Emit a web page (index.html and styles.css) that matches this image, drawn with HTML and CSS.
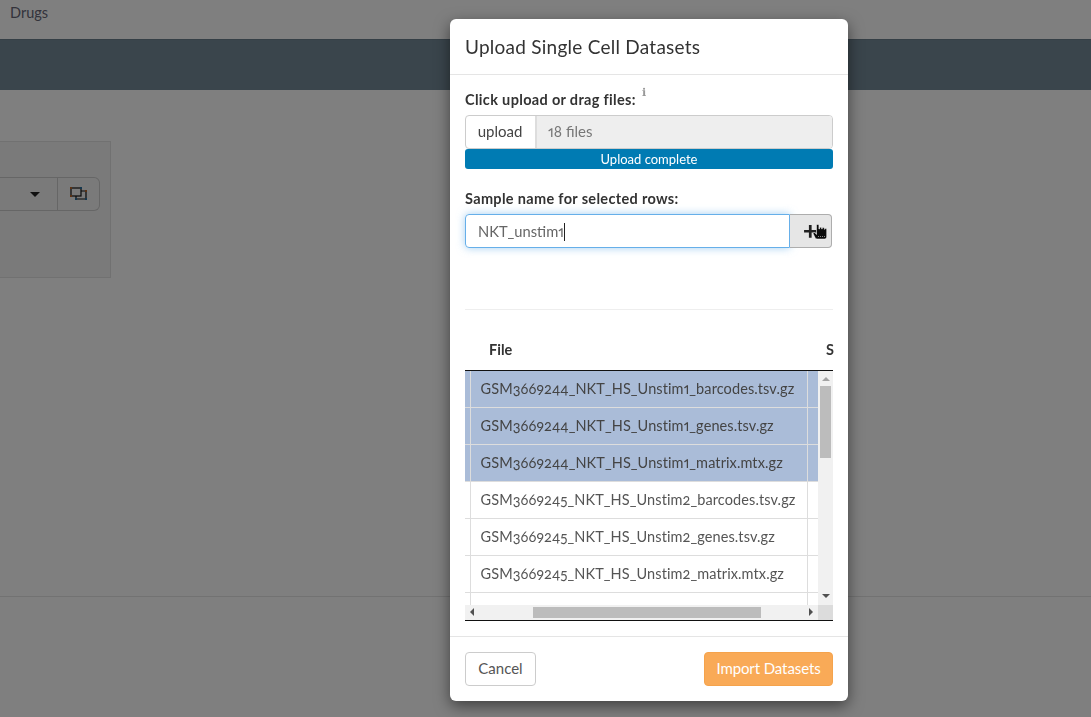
FILE: index.html
```html
<!DOCTYPE html>
<html lang="en">
<head>
    <meta charset="UTF-8">
    <meta name="viewport" content="width=device-width, initial-scale=1.0">
    <title>Upload Single Cell Datasets</title>
    <link rel="stylesheet" href="styles.css">
</head>
<body>
    <div class="page">
        <nav class="topnav">Drugs</nav>
        <div class="banner"></div>
        <main class="content">
            <div class="panel">
                <div class="picker">
                    <div class="picker-select"><span class="caret"></span></div>
                    <div class="picker-btn">
                        <svg width="18" height="14" viewBox="0 0 18 14" fill="none">
                            <rect x="1" y="1" width="10" height="8" stroke="#111" stroke-width="1.2"/>
                            <path d="M11 4h5v8H6V9" stroke="#111" stroke-width="1.2"/>
                            <rect x="0" y="0" width="2" height="2" fill="#b5642a"/>
                            <rect x="10" y="0" width="2" height="2" fill="#2b6f9c"/>
                            <rect x="0" y="8" width="2" height="2" fill="#b5642a"/>
                            <rect x="15" y="3" width="2" height="2" fill="#b5642a"/>
                            <rect x="15" y="11" width="2" height="2" fill="#2b6f9c"/>
                            <rect x="5" y="11" width="2" height="2" fill="#2b6f9c"/>
                        </svg>
                    </div>
                </div>
            </div>
        </main>
    </div>

    <div class="backdrop"></div>

    <div class="modal">
        <div class="modal-header">
            <h4>Upload Single Cell Datasets</h4>
        </div>
        <div class="modal-body">
            <div class="label-row">
                <label>Click upload or drag files:</label>
                <span class="info">&#8505;</span>
            </div>
            <div class="file-row">
                <span class="file-btn">upload</span>
                <span class="file-name">18 files</span>
            </div>
            <div class="progress">Upload complete</div>

            <label class="sample-label">Sample name for selected rows:</label>
            <div class="sample-row">
                <div class="sample-input">NKT_unstim1<span class="text-caret"></span></div>
                <div class="add-btn">
                    <span class="plus">+</span>
                    <svg class="hand" width="15" height="16" viewBox="0 0 15 16">
                        <path d="M3.500 1.500c0-1.400 2.400-1.400 2.400 0v3.500h.6V4c0-1.100 2.200-1.100 2.200 0v1h.5v-.6c0-1.100 2.200-1.100 2.200 0v.9h.3c0-1 2-1 2 .2v6.800c0 1.700-.8 2.700-2.200 2.700H4c-.8 0-1.300-.4-1.700-1L.3 10c-.6-1.200.8-2.100 1.700-1.200l1.500 1.700z" fill="#0b0b0b" stroke="#fff" stroke-width=".5"/>
                        <path d="M5 12.500h8" stroke="#888" stroke-width="1" stroke-dasharray="1 1"/>
                    </svg>
                </div>
            </div>

            <hr class="divider">

            <div class="grid-head">
                <span class="head-file">File</span>
                <span class="head-sample">S</span>
            </div>
            <div class="grid">
                <div class="grid-main">
                    <table class="files">
                        <tbody>
                            <tr class="selected"><td class="c0"></td><td class="c1">GSM3669244_NKT_HS_Unstim1_barcodes.tsv.gz</td><td></td></tr>
                            <tr class="selected"><td class="c0"></td><td class="c1">GSM3669244_NKT_HS_Unstim1_genes.tsv.gz</td><td></td></tr>
                            <tr class="selected"><td class="c0"></td><td class="c1">GSM3669244_NKT_HS_Unstim1_matrix.mtx.gz</td><td></td></tr>
                            <tr><td class="c0"></td><td class="c1">GSM3669245_NKT_HS_Unstim2_barcodes.tsv.gz</td><td></td></tr>
                            <tr><td class="c0"></td><td class="c1">GSM3669245_NKT_HS_Unstim2_genes.tsv.gz</td><td></td></tr>
                            <tr><td class="c0"></td><td class="c1">GSM3669245_NKT_HS_Unstim2_matrix.mtx.gz</td><td></td></tr>
                            <tr><td class="c0"></td><td class="c1"></td><td></td></tr>
                        </tbody>
                    </table>
                    <div class="vbar">
                        <span class="arrow up"></span>
                        <span class="vthumb"></span>
                        <span class="arrow down"></span>
                    </div>
                </div>
                <div class="hbar">
                    <div class="htrack">
                        <span class="arrow left"></span>
                        <span class="hthumb"></span>
                        <span class="arrow right"></span>
                    </div>
                    <div class="corner"></div>
                </div>
            </div>
        </div>
        <div class="modal-footer">
            <button class="btn-cancel">Cancel</button>
            <button class="btn-import">Import Datasets</button>
        </div>
    </div>
</body>
</html>
```

FILE: styles.css
```css
* {
    box-sizing: border-box;
}
html, body {
    height: 100%;
}
body {
    margin: 0;
    overflow: hidden;
    background-color: #fff;
    color: #333;
    font-family: Lato, "Noto Sans", sans-serif;
    font-size: 15px;
    font-feature-settings: "onum", "pnum";
}
.topnav {
    height: 39px;
    padding: 4px 10px;
    color: #667;
    font-size: 14.5px;
}
.banner {
    height: 51px;
    background-color: #748a98;
    border-top: 1px solid #6a7f8c;
}
.content {
    height: 507px;
    padding-top: 51px;
    border-bottom: 1px solid #e4e4e4;
}
.panel {
    width: 111px;
    height: 137px;
    padding-top: 35px;
    background-color: #f5f5f5;
    border: 1px solid #e3e3e3;
    border-left: none;
}
.picker {
    display: flex;
    width: 100px;
    height: 34px;
    border: 1px solid #ccc;
    border-left: none;
    border-radius: 0 6px 6px 0;
    background-color: #f5f5f5;
}
.picker-select {
    display: flex;
    align-items: center;
    justify-content: flex-end;
    flex: 1;
    padding-right: 17px;
    border-right: 1px solid #ccc;
}
.caret {
    border-top: 5px solid #222;
    border-left: 5px solid transparent;
    border-right: 5px solid transparent;
}
.picker-btn {
    display: flex;
    align-items: center;
    justify-content: center;
    width: 41px;
}
.backdrop {
    position: fixed;
    inset: 0;
    background-color: rgba(0, 0, 0, 0.5);
}
.modal {
    position: absolute;
    left: 450px;
    top: 19px;
    width: 398px;
    height: 682px;
    background-color: #fff;
    border-radius: 6px;
    box-shadow: 0 5px 15px rgba(0, 0, 0, 0.5);
}
.modal-header {
    height: 56px;
    padding: 15px;
    border-bottom: 1px solid #e5e5e5;
}
.modal-header h4 {
    margin: 0;
    font-size: 19px;
    font-weight: 400;
    line-height: 25px;
    letter-spacing: 0.25px;
}
.modal-body {
    height: 562px;
    padding: 0 15px;
    border-bottom: 1px solid #e5e5e5;
}
.label-row {
    display: flex;
    height: 40px;
    padding-top: 15px;
}
label {
    font-weight: 700;
    font-size: 14.5px;
    line-height: 20px;
    letter-spacing: 0.33px;
}
.info {
    margin: -4px 0 0 6px;
    color: #999;
    font-size: 11px;
    font-family: "DejaVu Sans", sans-serif;
}
.file-row {
    display: flex;
    height: 34px;
    border: 1px solid #ccc;
    border-radius: 4px;
    line-height: 31px;
    font-size: 15px;
    color: #444;
}
.file-btn {
    width: 71px;
    padding-right: 1px;
    text-align: center;
    border-right: 2px solid #ddd;
}
.file-name {
    flex: 1;
    padding-left: 11px;
    background-color: #eee;
    color: #777;
    border-radius: 0 3px 3px 0;
}
.progress {
    height: 20px;
    background-color: #007bb3;
    border-radius: 3px;
    color: #fff;
    text-align: center;
    font-size: 13px;
    line-height: 20px;
}
.sample-label {
    display: block;
    margin-top: 20px;
    height: 25px;
}
.sample-row {
    display: flex;
    width: 367px;
    height: 34px;
}
.sample-input {
    width: 325px;
    padding-left: 12px;
    border: 1px solid #66afe9;
    border-radius: 4px 0 0 4px;
    box-shadow: 0 0 8px rgba(102, 175, 233, 0.6);
    color: #666;
    font-size: 14.7px;
    line-height: 32px;
}
.text-caret {
    display: inline-block;
    width: 1px;
    height: 18px;
    background-color: #222;
    vertical-align: -4px;
}
.add-btn {
    position: relative;
    flex: 1;
    background-color: #e6e6e6;
    border: 1px solid #adadad;
    border-left: none;
    border-radius: 0 4px 4px 0;
}
.plus {
    position: absolute;
    left: 13px;
    top: -1px;
    color: #222;
    font-size: 27px;
    font-weight: 700;
    line-height: 30px;
}
.hand {
    position: absolute;
    left: 23px;
    top: 9px;
}
.divider {
    margin: 61px 0 0;
    border: none;
    border-top: 1px solid #eee;
}
.grid-head {
    position: relative;
    height: 61px;
    font-size: 14.5px;
    font-weight: 700;
    line-height: 80px;
    border-bottom: 1px solid #111;
}
.head-file {
    position: absolute;
    left: 24px;
    top: 0;
}
.head-sample {
    position: absolute;
    left: 361px;
    top: 0;
}
.grid {
    height: 250px;
    border-bottom: 1px solid #111;
}
.grid-main {
    display: flex;
    height: 234px;
    overflow: hidden;
}
.files {
    width: 353px;
    height: 258px;
    border-collapse: collapse;
    table-layout: fixed;
}
.files td {
    height: 37px;
    padding: 0 0 0 10px;
    border: 1px solid #ddd;
    border-top: none;
    color: #555;
    font-size: 14.5px;
    letter-spacing: 0.1px;
    white-space: nowrap;
    overflow: hidden;
}
.files tr:first-child td {
    height: 36px;
}
.files td:first-child {
    border-left: none;
}
.files td:last-child {
    border-right: none;
}
.files .c0 {
    width: 5px;
    padding: 0;
}
.files .c1 {
    width: 337px;
}
.selected td {
    background-color: #aabcd8;
    color: #444;
}
.vbar {
    position: relative;
    flex: none;
    width: 15px;
    background-color: #f1f1f1;
}
.vthumb {
    position: absolute;
    left: 2px;
    top: 15px;
    width: 11px;
    height: 72px;
    background-color: #bcbcbc;
}
.arrow {
    position: absolute;
    width: 0;
    height: 0;
    border: 4px solid transparent;
}
.arrow.up {
    left: 3.5px;
    top: 2px;
    border-bottom-color: #a3a3a3;
}
.arrow.down {
    left: 3.5px;
    bottom: 3px;
    border-top-color: #505050;
}
.hbar {
    display: flex;
    height: 15px;
}
.htrack {
    position: relative;
    flex: 1;
    background-color: #f1f1f1;
}
.hthumb {
    position: absolute;
    left: 68px;
    top: 2px;
    width: 228px;
    height: 11px;
    background-color: #bcbcbc;
}
.arrow.left {
    left: 1px;
    top: 3px;
    border-right-color: #505050;
}
.arrow.right {
    right: 1px;
    top: 3px;
    border-left-color: #505050;
}
.corner {
    width: 15px;
    background-color: #dcdcdc;
}
.modal-footer {
    display: flex;
    justify-content: space-between;
    padding: 15px;
}
button {
    height: 34px;
    padding: 0 0 2px;
    border-radius: 4px;
    font-family: inherit;
    font-size: 15px;
    font-feature-settings: inherit;
}
.btn-cancel {
    width: 71px;
    background-color: #fff;
    border: 1px solid #ccc;
    color: #555;
}
.btn-import {
    width: 129px;
    background-color: #f9aa57;
    border: 1px solid #f5a34c;
    color: #fff;
    letter-spacing: -0.1px;
}
```
